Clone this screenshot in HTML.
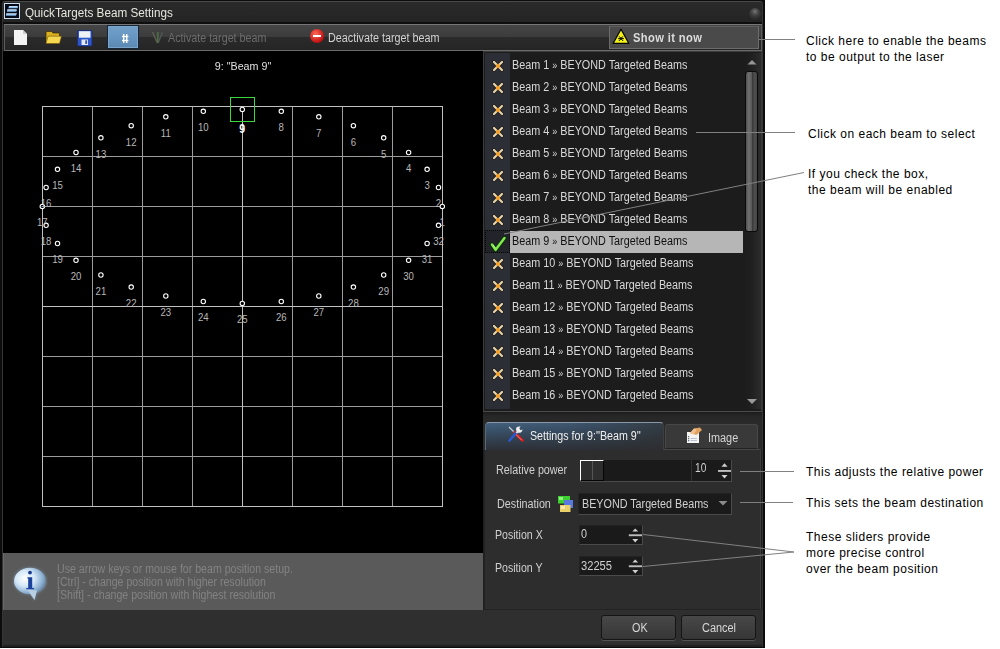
<!DOCTYPE html>
<html><head><meta charset="utf-8"><style>
*{margin:0;padding:0}
body{width:1000px;height:649px;background:#fff;position:relative;overflow:hidden;font-family:"Liberation Sans", sans-serif}
.a{position:absolute}
.t{position:absolute;font-size:12px;line-height:16px;white-space:nowrap;transform-origin:0 0}
.ann{position:absolute;font-size:12px;line-height:16px;color:#000;white-space:nowrap;letter-spacing:0.5px}
</style></head><body>
<!-- window -->
<div class="a" style="left:0;top:0;width:765px;height:648px;background:#0c0c0c"></div>
<div class="a" style="left:2px;top:1px;width:761px;height:646px;background:linear-gradient(#2a2a2a 0,#242424 20px,#1f1f1f 24px);border:1px solid #353535;border-top-color:#4a4a4a;border-bottom:none;box-sizing:border-box;border-radius:3px 3px 0 0"></div>
<div class="a" style="left:3px;top:21.5px;width:759px;height:2.5px;background:#0e0e0e"></div>
<svg class="a" style="left:4px;top:3px" width="16" height="16"><defs><linearGradient id="lg1" x1="0" y1="0" x2="0" y2="1"><stop offset="0" stop-color="#d8ecff"/><stop offset="1" stop-color="#6aa8e0"/></linearGradient></defs><rect x="0.5" y="0.5" width="15" height="15" fill="#050a16" stroke="#c8dcf0"/><path d="M5 3 H13.2 Q14.6 3.4 13.6 5.2 H4.4 Z" fill="url(#lg1)"/><path d="M3.4 6.2 H12.6 Q13.4 7.4 12.2 8.8 H2.8 Z" fill="url(#lg1)"/><path d="M2.2 10.2 H13 L11.8 12.8 H2 Z" fill="url(#lg1)"/></svg>
<div class="t" style="left:25px;top:5px;color:#e6e6de;transform:scaleX(0.976);">QuickTargets Beam Settings</div>
<div class="a" style="left:749px;top:8px;width:12px;height:12px;border-radius:50%;background:radial-gradient(circle at 50% 30%,#7a7a7a 0,#555 20%,#3a3a3a 45%,#2a2a2a 75%,#1f1f1f)"></div>
<!-- toolbar -->
<div class="a" style="left:4px;top:24px;width:758px;height:27px;border:1px solid #5e5e5e;border-top-color:#767676;border-bottom-color:#6a6a6a;box-sizing:border-box;background:linear-gradient(#454545,#3c3c3c 46%,#2b2b2b 50%,#252525)"></div>
<svg class="a" style="left:13px;top:29px" width="16" height="17"><path d="M1 1 H10 L14 5 V16 H1 Z" fill="#f4f4f4"/><path d="M10 1 V5 H14" fill="#ccc"/></svg>
<svg class="a" style="left:44px;top:30px" width="19" height="15"><path d="M2 2.5 Q2 1.5 3 1.5 H7.5 L9 3 H14.5 Q15.5 3 15.5 4 V12.5 Q15.5 13.5 14.5 13.5 H3 Q2 13.5 2 12.5 Z" fill="#d8b020" stroke="#3a2a00" stroke-width="0.7"/><path d="M4 6.2 H17.5 L15.5 13.5 H2 Z" fill="#f6d850" stroke="#5a4400" stroke-width="0.5"/></svg>
<svg class="a" style="left:77px;top:30px" width="16" height="17"><rect x="0.5" y="0.5" width="14.5" height="15.5" rx="1" fill="#2f56c8" stroke="#1a2a70" stroke-width="0.8"/><rect x="2" y="1.2" width="11.5" height="6.5" fill="#eef0f4"/><rect x="4.5" y="9.5" width="6.5" height="5.5" fill="#e4e8f0"/><rect x="8.3" y="10.3" width="1.8" height="3.6" fill="#3050b8"/></svg>
<div class="a" style="left:107px;top:25px;width:32px;height:24px;background:linear-gradient(#73a0c8,#6696c2 50%,#5a88b2);border:1px solid #152535;box-shadow:inset 0 0 0 1px #7aa4c8;box-sizing:border-box"></div>
<svg class="a" style="left:104px;top:22px" width="40" height="30"><g stroke="#fff" stroke-width="1.4"><line x1="19.7" y1="12" x2="19.7" y2="21"/><line x1="22.7" y1="12" x2="22.7" y2="21"/><line x1="18" y1="14.5" x2="24.4" y2="14.5"/><line x1="18" y1="18.5" x2="24.4" y2="18.5"/></g></svg>
<svg class="a" style="left:150px;top:29px" width="14" height="16"><path d="M2.5 3 L7.5 14" stroke="#5a5a52" stroke-width="1.8" fill="none"/><path d="M12.5 3 L8 14" stroke="#505454" stroke-width="1.6" fill="none"/><path d="M7.8 3 V14" stroke="#4e6a44" stroke-width="1.8"/></svg>
<div class="t" style="left:168px;top:30px;color:#6c6c6c;transform:scaleX(0.894);">Activate target beam</div>
<div class="a" style="left:310px;top:29px;width:14px;height:14px;border-radius:50%;background:radial-gradient(circle at 40% 35%,#ff6a5a,#c01010 70%)"></div>
<div class="a" style="left:313px;top:35px;width:8px;height:2px;background:#fff"></div>
<div class="t" style="left:328px;top:30px;color:#d4d4d4;transform:scaleX(0.898);">Deactivate target beam</div>
<div class="a" style="left:609px;top:26px;width:150px;height:23px;border:1px solid #6c6c6c;border-top-color:#5e5e5e;box-sizing:border-box;background:#4a4a4a"></div>
<svg class="a" style="left:612px;top:28px" width="18" height="17"><path d="M9 1.2 L16.8 15.3 H1.2 Z" fill="#f4f418" stroke="#050505" stroke-width="1.3" stroke-linejoin="round"/><circle cx="9" cy="10.6" r="1.5" fill="#111"/><path d="M6 10.6 H12" stroke="#111" stroke-width="0.9"/><g fill="#111"><circle cx="7.3" cy="8.8" r="0.6"/><circle cx="10.7" cy="8.8" r="0.6"/><circle cx="7.3" cy="12.4" r="0.6"/><circle cx="10.7" cy="12.4" r="0.6"/></g></svg>
<div class="t" style="left:633px;top:30px;color:#dcdcdc;transform:scaleX(0.93);font-weight:bold;letter-spacing:0.4px;">Show it now</div>
<!-- preview -->
<div class="a" style="left:3px;top:51px;width:480px;height:502px;background:#000;overflow:hidden">
<svg width="480" height="502" style="position:absolute;left:0;top:0" viewBox="3 51 480 502" font-family="Liberation Sans, sans-serif"><line x1="42.5" y1="106" x2="42.5" y2="507" stroke="#c0c0c0"/><line x1="42" y1="106.5" x2="443" y2="106.5" stroke="#c0c0c0"/><line x1="92.5" y1="106" x2="92.5" y2="507" stroke="#9c9c9c"/><line x1="42" y1="156.5" x2="443" y2="156.5" stroke="#9c9c9c"/><line x1="142.5" y1="106" x2="142.5" y2="507" stroke="#9c9c9c"/><line x1="42" y1="206.5" x2="443" y2="206.5" stroke="#9c9c9c"/><line x1="192.5" y1="106" x2="192.5" y2="507" stroke="#9c9c9c"/><line x1="42" y1="256.5" x2="443" y2="256.5" stroke="#9c9c9c"/><line x1="242.5" y1="106" x2="242.5" y2="507" stroke="#c0c0c0"/><line x1="42" y1="306.5" x2="443" y2="306.5" stroke="#c0c0c0"/><line x1="292.5" y1="106" x2="292.5" y2="507" stroke="#9c9c9c"/><line x1="42" y1="356.5" x2="443" y2="356.5" stroke="#9c9c9c"/><line x1="342.5" y1="106" x2="342.5" y2="507" stroke="#9c9c9c"/><line x1="42" y1="406.5" x2="443" y2="406.5" stroke="#9c9c9c"/><line x1="392.5" y1="106" x2="392.5" y2="507" stroke="#9c9c9c"/><line x1="42" y1="456.5" x2="443" y2="456.5" stroke="#9c9c9c"/><line x1="442.5" y1="106" x2="442.5" y2="507" stroke="#c0c0c0"/><line x1="42" y1="506.5" x2="443" y2="506.5" stroke="#c0c0c0"/><line x1="42.5" y1="106" x2="42.5" y2="507" stroke="#c0c0c0"/><line x1="42" y1="106.5" x2="443" y2="106.5" stroke="#c0c0c0"/><line x1="242.5" y1="106" x2="242.5" y2="507" stroke="#c0c0c0"/><line x1="42" y1="306.5" x2="443" y2="306.5" stroke="#c0c0c0"/><line x1="442.5" y1="106" x2="442.5" y2="507" stroke="#c0c0c0"/><line x1="42" y1="506.5" x2="443" y2="506.5" stroke="#c0c0c0"/><rect x="230.5" y="97.5" width="24" height="24" fill="none" stroke="#3cd83c"/><circle cx="442.3" cy="206.4" r="2.2" fill="#000" stroke="#fff" stroke-width="1.1"/><circle cx="438.5" cy="187.5" r="2.2" fill="#000" stroke="#fff" stroke-width="1.1"/><circle cx="427.1" cy="169.3" r="2.2" fill="#000" stroke="#fff" stroke-width="1.1"/><circle cx="408.6" cy="152.5" r="2.2" fill="#000" stroke="#fff" stroke-width="1.1"/><circle cx="383.7" cy="137.8" r="2.2" fill="#000" stroke="#fff" stroke-width="1.1"/><circle cx="353.4" cy="125.7" r="2.2" fill="#000" stroke="#fff" stroke-width="1.1"/><circle cx="318.8" cy="116.8" r="2.2" fill="#000" stroke="#fff" stroke-width="1.1"/><circle cx="281.3" cy="111.3" r="2.2" fill="#000" stroke="#fff" stroke-width="1.1"/><circle cx="242.3" cy="109.4" r="2.2" fill="#000" stroke="#fff" stroke-width="1.1"/><circle cx="203.3" cy="111.3" r="2.2" fill="#000" stroke="#fff" stroke-width="1.1"/><circle cx="165.8" cy="116.8" r="2.2" fill="#000" stroke="#fff" stroke-width="1.1"/><circle cx="131.2" cy="125.7" r="2.2" fill="#000" stroke="#fff" stroke-width="1.1"/><circle cx="100.9" cy="137.8" r="2.2" fill="#000" stroke="#fff" stroke-width="1.1"/><circle cx="76.0" cy="152.5" r="2.2" fill="#000" stroke="#fff" stroke-width="1.1"/><circle cx="57.5" cy="169.3" r="2.2" fill="#000" stroke="#fff" stroke-width="1.1"/><circle cx="46.1" cy="187.5" r="2.2" fill="#000" stroke="#fff" stroke-width="1.1"/><circle cx="42.3" cy="206.4" r="2.2" fill="#000" stroke="#fff" stroke-width="1.1"/><circle cx="46.1" cy="225.3" r="2.2" fill="#000" stroke="#fff" stroke-width="1.1"/><circle cx="57.5" cy="243.5" r="2.2" fill="#000" stroke="#fff" stroke-width="1.1"/><circle cx="76.0" cy="260.3" r="2.2" fill="#000" stroke="#fff" stroke-width="1.1"/><circle cx="100.9" cy="275.0" r="2.2" fill="#000" stroke="#fff" stroke-width="1.1"/><circle cx="131.2" cy="287.1" r="2.2" fill="#000" stroke="#fff" stroke-width="1.1"/><circle cx="165.8" cy="296.0" r="2.2" fill="#000" stroke="#fff" stroke-width="1.1"/><circle cx="203.3" cy="301.5" r="2.2" fill="#000" stroke="#fff" stroke-width="1.1"/><circle cx="242.3" cy="303.4" r="2.2" fill="#000" stroke="#fff" stroke-width="1.1"/><circle cx="281.3" cy="301.5" r="2.2" fill="#000" stroke="#fff" stroke-width="1.1"/><circle cx="318.8" cy="296.0" r="2.2" fill="#000" stroke="#fff" stroke-width="1.1"/><circle cx="353.4" cy="287.1" r="2.2" fill="#000" stroke="#fff" stroke-width="1.1"/><circle cx="383.7" cy="275.0" r="2.2" fill="#000" stroke="#fff" stroke-width="1.1"/><circle cx="408.6" cy="260.3" r="2.2" fill="#000" stroke="#fff" stroke-width="1.1"/><circle cx="427.1" cy="243.5" r="2.2" fill="#000" stroke="#fff" stroke-width="1.1"/><circle cx="438.5" cy="225.3" r="2.2" fill="#000" stroke="#fff" stroke-width="1.1"/><text transform="translate(442.3 226.2) scale(0.86 1)" fill="#b8b8b8" font-size="11.2" text-anchor="middle">1</text><text transform="translate(438.5 207.3) scale(0.86 1)" fill="#b8b8b8" font-size="11.2" text-anchor="middle">2</text><text transform="translate(427.1 189.1) scale(0.86 1)" fill="#b8b8b8" font-size="11.2" text-anchor="middle">3</text><text transform="translate(408.6 172.3) scale(0.86 1)" fill="#b8b8b8" font-size="11.2" text-anchor="middle">4</text><text transform="translate(383.7 157.6) scale(0.86 1)" fill="#b8b8b8" font-size="11.2" text-anchor="middle">5</text><text transform="translate(353.4 145.5) scale(0.86 1)" fill="#b8b8b8" font-size="11.2" text-anchor="middle">6</text><text transform="translate(318.8 136.6) scale(0.86 1)" fill="#b8b8b8" font-size="11.2" text-anchor="middle">7</text><text transform="translate(281.3 131.1) scale(0.86 1)" fill="#b8b8b8" font-size="11.2" text-anchor="middle">8</text><text transform="translate(242.3 133.0) scale(0.88 1)" fill="#fff" font-weight="bold" font-size="12" text-anchor="middle">9</text><text transform="translate(203.3 131.1) scale(0.86 1)" fill="#b8b8b8" font-size="11.2" text-anchor="middle">10</text><text transform="translate(165.8 136.6) scale(0.86 1)" fill="#b8b8b8" font-size="11.2" text-anchor="middle">11</text><text transform="translate(131.2 145.5) scale(0.86 1)" fill="#b8b8b8" font-size="11.2" text-anchor="middle">12</text><text transform="translate(100.9 157.6) scale(0.86 1)" fill="#b8b8b8" font-size="11.2" text-anchor="middle">13</text><text transform="translate(76.0 172.3) scale(0.86 1)" fill="#b8b8b8" font-size="11.2" text-anchor="middle">14</text><text transform="translate(57.5 189.1) scale(0.86 1)" fill="#b8b8b8" font-size="11.2" text-anchor="middle">15</text><text transform="translate(46.1 207.3) scale(0.86 1)" fill="#b8b8b8" font-size="11.2" text-anchor="middle">16</text><text transform="translate(42.3 226.2) scale(0.86 1)" fill="#b8b8b8" font-size="11.2" text-anchor="middle">17</text><text transform="translate(46.1 245.1) scale(0.86 1)" fill="#b8b8b8" font-size="11.2" text-anchor="middle">18</text><text transform="translate(57.5 263.3) scale(0.86 1)" fill="#b8b8b8" font-size="11.2" text-anchor="middle">19</text><text transform="translate(76.0 280.1) scale(0.86 1)" fill="#b8b8b8" font-size="11.2" text-anchor="middle">20</text><text transform="translate(100.9 294.8) scale(0.86 1)" fill="#b8b8b8" font-size="11.2" text-anchor="middle">21</text><text transform="translate(131.2 306.9) scale(0.86 1)" fill="#b8b8b8" font-size="11.2" text-anchor="middle">22</text><text transform="translate(165.8 315.8) scale(0.86 1)" fill="#b8b8b8" font-size="11.2" text-anchor="middle">23</text><text transform="translate(203.3 321.3) scale(0.86 1)" fill="#b8b8b8" font-size="11.2" text-anchor="middle">24</text><text transform="translate(242.3 323.2) scale(0.86 1)" fill="#b8b8b8" font-size="11.2" text-anchor="middle">25</text><text transform="translate(281.3 321.3) scale(0.86 1)" fill="#b8b8b8" font-size="11.2" text-anchor="middle">26</text><text transform="translate(318.8 315.8) scale(0.86 1)" fill="#b8b8b8" font-size="11.2" text-anchor="middle">27</text><text transform="translate(353.4 306.9) scale(0.86 1)" fill="#b8b8b8" font-size="11.2" text-anchor="middle">28</text><text transform="translate(383.7 294.8) scale(0.86 1)" fill="#b8b8b8" font-size="11.2" text-anchor="middle">29</text><text transform="translate(408.6 280.1) scale(0.86 1)" fill="#b8b8b8" font-size="11.2" text-anchor="middle">30</text><text transform="translate(427.1 263.3) scale(0.86 1)" fill="#b8b8b8" font-size="11.2" text-anchor="middle">31</text><text transform="translate(438.5 245.1) scale(0.86 1)" fill="#b8b8b8" font-size="11.2" text-anchor="middle">32</text></svg>
</div>
<div class="a" style="left:3px;top:58.5px;width:480px;text-align:center;font-size:11px;line-height:14px;color:#e0e0e0;transform:scaleX(0.975)">9: "Beam 9"</div>
<!-- info -->
<div class="a" style="left:3px;top:553px;width:480px;height:57px;background:#5a5a5a;border-left:1px solid #686868;box-sizing:border-box"></div>
<svg class="a" style="left:8px;top:560px" width="44" height="44"><defs><radialGradient id="bg1" cx="35%" cy="40%" r="65%"><stop offset="0" stop-color="#fff"/><stop offset="0.45" stop-color="#d4e8f8"/><stop offset="0.85" stop-color="#8aaed0"/><stop offset="1" stop-color="#6c8aa6"/></radialGradient><filter id="gl" x="-20%" y="-20%" width="140%" height="140%"><feGaussianBlur stdDeviation="1.2"/></filter></defs>
<g filter="url(#gl)" opacity="0.55"><ellipse cx="22" cy="21" rx="17" ry="14" fill="#7a8ea0"/><path d="M19 31 L27 41 L30 31 Z" fill="#7a8ea0"/></g>
<ellipse cx="22" cy="21" rx="16" ry="13.2" fill="url(#bg1)"/><path d="M19.5 30 L26.5 40 L29 30.5 Z" fill="#b8cfe2"/>
<circle cx="22" cy="12.6" r="1.9" fill="#163a8e"/><path d="M19.4 17.2 H24.2 V28 H26.1 V29.2 H18.3 V28 H20.2 V18.4 H19.4 Z" fill="#1a429c"/></svg>
<div class="t" style="left:57px;top:562.5px;color:#838383;transform:scaleX(0.882);font-size:12px;line-height:13px;">Use arrow keys or mouse for beam position setup.<br>[Ctrl] - change position with higher resolution<br>[Shift] - change position with highest resolution</div>
<!-- bottom bar -->
<div class="a" style="left:3px;top:610px;width:759px;height:37px;background:linear-gradient(#2f2f2f 0,#2f2f2f 31px,#343434 32px,#2e2e2e 33px,#333 34px,#252525 35px,#1e1e1e 37px)"></div>
<!-- right column -->
<div class="a" style="left:483px;top:51px;width:279px;height:361px;background:#1c1c1c;border:1px solid #3c3c3c;border-bottom-color:#4a4a4a;box-sizing:border-box"></div>
<div class="a" style="left:485px;top:53px;width:25px;height:356px;background:#2b2e34"></div>
<svg class="a" width="14" height="14" style="left:491px;top:59px"><path d="M3 3 L11 11 M11 3 L3 11" stroke="#1a1008" stroke-width="3.6" stroke-linecap="round" opacity="0.7"/><path d="M3 3 L11 11 M11 3 L3 11" stroke="#e6d6b0" stroke-width="2.2" stroke-linecap="round"/><circle cx="7" cy="7" r="2.2" fill="#f0a030"/></svg>
<div class="t" style="left:512px;top:57px;color:#d8d8d8;transform:scaleX(0.9);">Beam 1 <span style="font-size:10px">&raquo;</span> BEYOND Targeted Beams</div>
<svg class="a" width="14" height="14" style="left:491px;top:81px"><path d="M3 3 L11 11 M11 3 L3 11" stroke="#1a1008" stroke-width="3.6" stroke-linecap="round" opacity="0.7"/><path d="M3 3 L11 11 M11 3 L3 11" stroke="#e6d6b0" stroke-width="2.2" stroke-linecap="round"/><circle cx="7" cy="7" r="2.2" fill="#f0a030"/></svg>
<div class="t" style="left:512px;top:79px;color:#d8d8d8;transform:scaleX(0.9);">Beam 2 <span style="font-size:10px">&raquo;</span> BEYOND Targeted Beams</div>
<svg class="a" width="14" height="14" style="left:491px;top:103px"><path d="M3 3 L11 11 M11 3 L3 11" stroke="#1a1008" stroke-width="3.6" stroke-linecap="round" opacity="0.7"/><path d="M3 3 L11 11 M11 3 L3 11" stroke="#e6d6b0" stroke-width="2.2" stroke-linecap="round"/><circle cx="7" cy="7" r="2.2" fill="#f0a030"/></svg>
<div class="t" style="left:512px;top:101px;color:#d8d8d8;transform:scaleX(0.9);">Beam 3 <span style="font-size:10px">&raquo;</span> BEYOND Targeted Beams</div>
<svg class="a" width="14" height="14" style="left:491px;top:125px"><path d="M3 3 L11 11 M11 3 L3 11" stroke="#1a1008" stroke-width="3.6" stroke-linecap="round" opacity="0.7"/><path d="M3 3 L11 11 M11 3 L3 11" stroke="#e6d6b0" stroke-width="2.2" stroke-linecap="round"/><circle cx="7" cy="7" r="2.2" fill="#f0a030"/></svg>
<div class="t" style="left:512px;top:123px;color:#d8d8d8;transform:scaleX(0.9);">Beam 4 <span style="font-size:10px">&raquo;</span> BEYOND Targeted Beams</div>
<svg class="a" width="14" height="14" style="left:491px;top:147px"><path d="M3 3 L11 11 M11 3 L3 11" stroke="#1a1008" stroke-width="3.6" stroke-linecap="round" opacity="0.7"/><path d="M3 3 L11 11 M11 3 L3 11" stroke="#e6d6b0" stroke-width="2.2" stroke-linecap="round"/><circle cx="7" cy="7" r="2.2" fill="#f0a030"/></svg>
<div class="t" style="left:512px;top:145px;color:#d8d8d8;transform:scaleX(0.9);">Beam 5 <span style="font-size:10px">&raquo;</span> BEYOND Targeted Beams</div>
<svg class="a" width="14" height="14" style="left:491px;top:169px"><path d="M3 3 L11 11 M11 3 L3 11" stroke="#1a1008" stroke-width="3.6" stroke-linecap="round" opacity="0.7"/><path d="M3 3 L11 11 M11 3 L3 11" stroke="#e6d6b0" stroke-width="2.2" stroke-linecap="round"/><circle cx="7" cy="7" r="2.2" fill="#f0a030"/></svg>
<div class="t" style="left:512px;top:167px;color:#d8d8d8;transform:scaleX(0.9);">Beam 6 <span style="font-size:10px">&raquo;</span> BEYOND Targeted Beams</div>
<svg class="a" width="14" height="14" style="left:491px;top:191px"><path d="M3 3 L11 11 M11 3 L3 11" stroke="#1a1008" stroke-width="3.6" stroke-linecap="round" opacity="0.7"/><path d="M3 3 L11 11 M11 3 L3 11" stroke="#e6d6b0" stroke-width="2.2" stroke-linecap="round"/><circle cx="7" cy="7" r="2.2" fill="#f0a030"/></svg>
<div class="t" style="left:512px;top:189px;color:#d8d8d8;transform:scaleX(0.9);">Beam 7 <span style="font-size:10px">&raquo;</span> BEYOND Targeted Beams</div>
<svg class="a" width="14" height="14" style="left:491px;top:213px"><path d="M3 3 L11 11 M11 3 L3 11" stroke="#1a1008" stroke-width="3.6" stroke-linecap="round" opacity="0.7"/><path d="M3 3 L11 11 M11 3 L3 11" stroke="#e6d6b0" stroke-width="2.2" stroke-linecap="round"/><circle cx="7" cy="7" r="2.2" fill="#f0a030"/></svg>
<div class="t" style="left:512px;top:211px;color:#d8d8d8;transform:scaleX(0.9);">Beam 8 <span style="font-size:10px">&raquo;</span> BEYOND Targeted Beams</div>
<div class="a" style="left:485px;top:230px;width:25px;height:23px;background:#22242a;border:1px dotted #050505;box-sizing:border-box"></div>
<svg class="a" width="18" height="18" style="left:489px;top:235px"><path d="M2.5 9.5 L6.5 15.5 L16 2.5" stroke="#0a2a0a" stroke-width="4" fill="none" stroke-linecap="round" stroke-linejoin="round"/><path d="M3 9.5 L6.6 14.8 L15.5 3" stroke="#7ee84a" stroke-width="2.6" fill="none" stroke-linecap="round" stroke-linejoin="round"/><path d="M4 10 L6.6 13.5" stroke="#b8ff90" stroke-width="1" fill="none"/></svg>
<div class="a" style="left:510px;top:231px;width:233px;height:22px;background:#b6b6b6"></div>
<div class="t" style="left:512px;top:233px;color:#101010;transform:scaleX(0.9);">Beam 9 <span style="font-size:10px">&raquo;</span> BEYOND Targeted Beams</div>
<svg class="a" width="14" height="14" style="left:491px;top:257px"><path d="M3 3 L11 11 M11 3 L3 11" stroke="#1a1008" stroke-width="3.6" stroke-linecap="round" opacity="0.7"/><path d="M3 3 L11 11 M11 3 L3 11" stroke="#e6d6b0" stroke-width="2.2" stroke-linecap="round"/><circle cx="7" cy="7" r="2.2" fill="#f0a030"/></svg>
<div class="t" style="left:512px;top:255px;color:#d8d8d8;transform:scaleX(0.9);">Beam 10 <span style="font-size:10px">&raquo;</span> BEYOND Targeted Beams</div>
<svg class="a" width="14" height="14" style="left:491px;top:279px"><path d="M3 3 L11 11 M11 3 L3 11" stroke="#1a1008" stroke-width="3.6" stroke-linecap="round" opacity="0.7"/><path d="M3 3 L11 11 M11 3 L3 11" stroke="#e6d6b0" stroke-width="2.2" stroke-linecap="round"/><circle cx="7" cy="7" r="2.2" fill="#f0a030"/></svg>
<div class="t" style="left:512px;top:277px;color:#d8d8d8;transform:scaleX(0.9);">Beam 11 <span style="font-size:10px">&raquo;</span> BEYOND Targeted Beams</div>
<svg class="a" width="14" height="14" style="left:491px;top:301px"><path d="M3 3 L11 11 M11 3 L3 11" stroke="#1a1008" stroke-width="3.6" stroke-linecap="round" opacity="0.7"/><path d="M3 3 L11 11 M11 3 L3 11" stroke="#e6d6b0" stroke-width="2.2" stroke-linecap="round"/><circle cx="7" cy="7" r="2.2" fill="#f0a030"/></svg>
<div class="t" style="left:512px;top:299px;color:#d8d8d8;transform:scaleX(0.9);">Beam 12 <span style="font-size:10px">&raquo;</span> BEYOND Targeted Beams</div>
<svg class="a" width="14" height="14" style="left:491px;top:323px"><path d="M3 3 L11 11 M11 3 L3 11" stroke="#1a1008" stroke-width="3.6" stroke-linecap="round" opacity="0.7"/><path d="M3 3 L11 11 M11 3 L3 11" stroke="#e6d6b0" stroke-width="2.2" stroke-linecap="round"/><circle cx="7" cy="7" r="2.2" fill="#f0a030"/></svg>
<div class="t" style="left:512px;top:321px;color:#d8d8d8;transform:scaleX(0.9);">Beam 13 <span style="font-size:10px">&raquo;</span> BEYOND Targeted Beams</div>
<svg class="a" width="14" height="14" style="left:491px;top:345px"><path d="M3 3 L11 11 M11 3 L3 11" stroke="#1a1008" stroke-width="3.6" stroke-linecap="round" opacity="0.7"/><path d="M3 3 L11 11 M11 3 L3 11" stroke="#e6d6b0" stroke-width="2.2" stroke-linecap="round"/><circle cx="7" cy="7" r="2.2" fill="#f0a030"/></svg>
<div class="t" style="left:512px;top:343px;color:#d8d8d8;transform:scaleX(0.9);">Beam 14 <span style="font-size:10px">&raquo;</span> BEYOND Targeted Beams</div>
<svg class="a" width="14" height="14" style="left:491px;top:367px"><path d="M3 3 L11 11 M11 3 L3 11" stroke="#1a1008" stroke-width="3.6" stroke-linecap="round" opacity="0.7"/><path d="M3 3 L11 11 M11 3 L3 11" stroke="#e6d6b0" stroke-width="2.2" stroke-linecap="round"/><circle cx="7" cy="7" r="2.2" fill="#f0a030"/></svg>
<div class="t" style="left:512px;top:365px;color:#d8d8d8;transform:scaleX(0.9);">Beam 15 <span style="font-size:10px">&raquo;</span> BEYOND Targeted Beams</div>
<svg class="a" width="14" height="14" style="left:491px;top:389px"><path d="M3 3 L11 11 M11 3 L3 11" stroke="#1a1008" stroke-width="3.6" stroke-linecap="round" opacity="0.7"/><path d="M3 3 L11 11 M11 3 L3 11" stroke="#e6d6b0" stroke-width="2.2" stroke-linecap="round"/><circle cx="7" cy="7" r="2.2" fill="#f0a030"/></svg>
<div class="t" style="left:512px;top:387px;color:#d8d8d8;transform:scaleX(0.9);">Beam 16 <span style="font-size:10px">&raquo;</span> BEYOND Targeted Beams</div>
<div class="a" style="left:744px;top:53px;width:17px;height:356px;background:linear-gradient(90deg,#1c1c1c,#1f1f1f 40%,#2c2c2c)"></div>
<svg class="a" style="left:746px;top:58.5px" width="12" height="7"><path d="M1.5 5.5 L6 1 L10.5 5.5 Z" fill="#959595"/></svg>
<div class="a" style="left:745px;top:71px;width:13px;height:161px;border-radius:3px;background:linear-gradient(90deg,#4e4e4e,#707070 25%,#5a5a5a 50%,#3a3a3a 58%,#505050 80%,#444);border:1px solid #0a0a0a;box-sizing:border-box"></div>
<svg class="a" style="left:746px;top:398px" width="12" height="7"><path d="M1 1 L6 6 L11 1 Z" fill="#9a9a9a"/></svg>
<div class="a" style="left:483px;top:412px;width:279px;height:37px;background:linear-gradient(#1c1c1c,#262626 4px,#2a2a2a 12px)"></div>
<!-- tabs -->
<div class="a" style="left:484px;top:449px;width:277px;height:161px;background:#2d2d2d;border:1px solid #232323;border-top-color:#474747;border-right-color:#3c3c3c;box-sizing:border-box"></div>
<div class="a" style="left:485px;top:422px;width:179px;height:28px;border-radius:4px 4px 0 0;background:linear-gradient(90deg,rgba(45,45,45,0) 0%,rgba(45,45,45,0.15) 45%,rgba(45,45,45,0.7) 100%),linear-gradient(180deg,#43607e 0%,#3a536c 25%,#323f4d 65%,#2d3038 100%);border:1px solid #5a6a7a;border-top-color:#8898a8;border-right-color:#3e3e3e;border-bottom:none;box-sizing:border-box"></div>
<svg class="a" style="left:500px;top:420px" width="30" height="30"><path d="M9 7 L14.5 12.5" stroke="#c8d0d8" stroke-width="1.2"/><path d="M14.5 12.5 L22.5 20.5" stroke="#d02020" stroke-width="2.8" stroke-linecap="round"/><path d="M15 13.5 L21.5 20" stroke="#ff9090" stroke-width="0.8"/><path d="M16 13 L9.5 20.5" stroke="#2a5ad0" stroke-width="2.6" stroke-linecap="round"/><path d="M17 7 A3.3 3.3 0 1 0 22.6 9.5 L20.5 10.2 L19.3 8.2 L20.6 6.2 Z" fill="#f0f0f0"/><path d="M18.5 10.5 L16.5 13" stroke="#e8e8e8" stroke-width="2"/></svg>
<div class="t" style="left:530px;top:428px;color:#f0f0f0;transform:scaleX(0.89);">Settings for 9:''Beam 9''</div>
<div class="a" style="left:665px;top:424px;width:93px;height:25px;border-radius:3px 3px 0 0;background:#393939;border:1px solid #474747;border-bottom:1px solid #222;box-sizing:border-box"></div>
<svg class="a" style="left:680px;top:422px" width="26" height="26"><rect x="7" y="10" width="12" height="11" fill="#f4f4f4"/><path d="M10 11 L14 6.5 L20 5.5 L22 8 L16.5 13 Z" fill="#e0a060"/><path d="M10 11 L14 6.5 L17 7.5 L13.5 12.5 Z" fill="#f0c090"/><g fill="#667"><rect x="8" y="14" width="1.2" height="1.2"/><rect x="8" y="16" width="1.2" height="1.2"/><rect x="8" y="18" width="1.2" height="1.2"/></g><g stroke="#a8b4c8" stroke-width="0.8"><line x1="10.5" y1="16.5" x2="17" y2="16.5"/><line x1="10.5" y1="18.5" x2="17" y2="18.5"/></g></svg>
<div class="t" style="left:708px;top:430px;color:#d4d4d4;transform:scaleX(0.906);">Image</div>
<!-- settings panel -->
<div class="t" style="left:496px;top:462px;color:#d0d0d0;transform:scaleX(0.897);">Relative power</div>
<div class="a" style="left:580px;top:460px;width:152px;height:22px;background:#1a1a1a;border-bottom:1px solid #4a4a4a;border-right:1px solid #4a4a4a;box-sizing:border-box"></div>
<div class="a" style="left:580px;top:460px;width:24px;height:21px;background:#2e2e2e;border-left:1px solid #fff;border-top:1px solid #fff;border-right:1px solid #050505;border-bottom:1px solid #050505;box-sizing:border-box"></div>
<div class="a" style="left:592px;top:461px;width:1px;height:19px;background:#555"></div>
<div class="a" style="left:691px;top:460px;width:1px;height:21px;background:#333"></div>
<div class="t" style="left:695px;top:460px;color:#d0d0d0;transform:scaleX(0.85);">10</div>
<svg class="a" style="left:716px;top:460px" width="16" height="20"><path d="M5.5 6.8 L8.5 3.3 L11.5 6.8 Z" fill="#d0d0d0"/><rect x="2" y="10" width="13" height="1.9" fill="#bdbdbd"/><path d="M5.5 15 L8.5 18.4 L11.5 15 Z" fill="#d0d0d0"/></svg>
<div class="t" style="left:497px;top:496px;color:#d0d0d0;transform:scaleX(0.897);">Destination</div>
<svg class="a" style="left:552px;top:490px" width="28" height="28"><rect x="6" y="6" width="12" height="7.5" fill="#3cd030"/><rect x="7" y="7" width="4" height="3" fill="#90f080"/><rect x="12" y="10" width="9" height="8" fill="#5a78e0"/><rect x="8" y="15" width="10.5" height="7" fill="#ecd068"/><rect x="9" y="16" width="4" height="3" fill="#f8e8b0"/></svg>
<div class="a" style="left:578px;top:493px;width:154px;height:22px;background:#1a1a1a;border:1px solid #4a4a4a;border-top-color:#222;border-left-color:#262626;box-sizing:border-box"></div>
<div class="t" style="left:582px;top:496px;color:#d0d0d0;transform:scaleX(0.896);">BEYOND Targeted Beams</div>
<svg class="a" style="left:717px;top:500px" width="12" height="8"><path d="M1.5 1 L6 5.5 L10.5 1 Z" fill="#8a8a8a"/></svg>
<div class="t" style="left:495px;top:527px;color:#d0d0d0;transform:scaleX(0.883);">Position X</div>
<div class="a" style="left:579px;top:525px;width:64px;height:20px;background:#1a1a1a;border:1px solid #4a4a4a;border-top-color:#222;border-left-color:#222;box-sizing:border-box"></div>
<div class="t" style="left:581px;top:526px;color:#d0d0d0;transform:scaleX(0.9);">0</div>
<svg class="a" style="left:627px;top:524.6px" width="16" height="20"><path d="M5.3 6.6 L8.25 3.4 L11.2 6.6 Z" fill="#d0d0d0"/><rect x="1.8" y="9.3" width="13.2" height="1.9" fill="#bdbdbd"/><path d="M5.3 14 L8.25 17.4 L11.2 14 Z" fill="#d0d0d0"/></svg>
<div class="t" style="left:495px;top:560px;color:#d0d0d0;transform:scaleX(0.883);">Position Y</div>
<div class="a" style="left:579px;top:556px;width:64px;height:20px;background:#1a1a1a;border:1px solid #4a4a4a;border-top-color:#222;border-left-color:#222;box-sizing:border-box"></div>
<div class="t" style="left:581px;top:558px;color:#d0d0d0;transform:scaleX(0.93);">32255</div>
<svg class="a" style="left:627px;top:556.4px" width="16" height="20"><path d="M5.3 6.6 L8.25 3.4 L11.2 6.6 Z" fill="#d0d0d0"/><rect x="1.8" y="9.3" width="13.2" height="1.9" fill="#bdbdbd"/><path d="M5.3 14 L8.25 17.4 L11.2 14 Z" fill="#d0d0d0"/></svg>
<!-- buttons -->
<div class="a" style="left:601px;top:615px;width:75px;height:25px;border-radius:3px;background:linear-gradient(#484848,#363636);border:1px solid #151515;box-shadow:0 1px 0 #555;box-sizing:border-box"></div>
<div class="t" style="left:632px;top:620px;color:#d8d8d8;transform:scaleX(0.9);">OK</div>
<div class="a" style="left:681px;top:615px;width:75px;height:25px;border-radius:3px;background:linear-gradient(#484848,#363636);border:1px solid #151515;box-shadow:0 1px 0 #555;box-sizing:border-box"></div>
<div class="t" style="left:702px;top:620px;color:#d8d8d8;transform:scaleX(0.91);">Cancel</div>
<!-- annotation lines -->
<svg class="a" style="left:0;top:0" width="1000" height="649">
<g stroke="#808080" stroke-width="1" fill="none">
<line x1="759" y1="39.5" x2="795" y2="39.5"/>
<line x1="696" y1="132.5" x2="795" y2="132.5"/>
<line x1="504" y1="234" x2="804" y2="172.5"/>
<line x1="740" y1="471.5" x2="794" y2="471.5"/>
<line x1="740" y1="502.5" x2="793" y2="502.5"/>
<line x1="643" y1="534.5" x2="794" y2="552"/>
<line x1="643" y1="566.5" x2="794" y2="552"/>
</g></svg>
<div class="ann" style="left:806px;top:33px">Click here to enable the beams<br>to be output to the laser</div>
<div class="ann" style="left:808px;top:126px">Click on each beam to select</div>
<div class="ann" style="left:808px;top:166px">If you check the box,<br>the beam will be enabled</div>
<div class="ann" style="left:806px;top:464px">This adjusts the relative power</div>
<div class="ann" style="left:806px;top:495px">This sets the beam destination</div>
<div class="ann" style="left:806px;top:529px">These sliders provide<br>more precise control<br>over the beam position</div>
</body></html>
